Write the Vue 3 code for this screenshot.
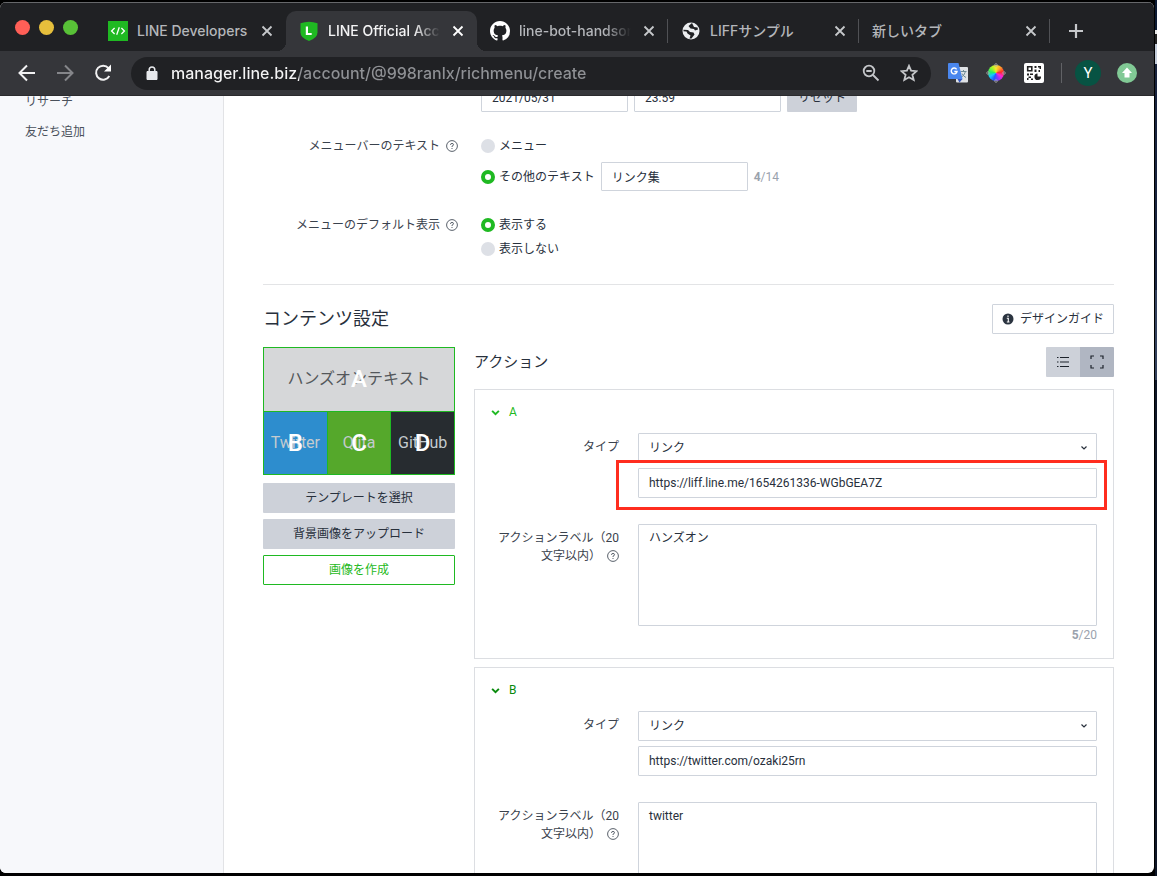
<script setup>
import { ref } from 'vue'

const tabs = [
  { icon: 'dev', title: 'LINE Developers' },
  { icon: 'shield', title: 'LINE Official Account Manager', active: true, fade: true },
  { icon: 'github', title: 'line-bot-handson', fade: true },
  { icon: 'globe', title: 'LIFFサンプル' },
  { icon: '', title: '新しいタブ' },
]

const url = ref('manager.line.biz/account/@998ranlx/richmenu/create')
const endDate = ref('2021/05/31')
const endTime = ref('23:59')
const barKind = ref('other')
const barText = ref('リンク集')
const display = ref('show')

const cards = ref([
  { key: 'A', url: 'https://liff.line.me/1654261336-WGbGEA7Z', text: 'ハンズオン', marked: true },
  { key: 'B', url: 'https://twitter.com/ozaki25rn', text: 'twitter', marked: false },
])

const areas = [
  { key: 'A', text: 'ハンズオンテキスト' },
  { key: 'B', text: 'Twitter' },
  { key: 'C', text: 'Qiita' },
  { key: 'D', text: 'GitHub' },
]
</script>

<template>
  <div class="desktop">
    <div class="window">
      <header class="tabstrip">
        <div class="lights">
          <button class="light red" aria-label="Close window"></button>
          <button class="light yellow" aria-label="Minimize window"></button>
          <button class="light green" aria-label="Zoom window"></button>
        </div>
        <div v-for="t in tabs" :key="t.title" class="tab" :class="{ active: t.active }">
          <svg v-if="t.icon === 'dev'" class="favicon" viewBox="0 0 20 20">
            <rect width="20" height="20" fill="#1fb922" />
            <path d="M6.6 7 3.6 10l3 3M13.4 7l3 3-3 3M11.3 6.3 8.7 13.7" fill="none" stroke="#fff" stroke-width="1.3" />
          </svg>
          <svg v-else-if="t.icon === 'shield'" class="favicon" viewBox="0 0 20 20">
            <path d="M1.5 2.2Q10-.8 18.500 2.200V11.500Q18.500 17 10 20 1.500 17 1.500 11.500Z" fill="#1fb922" />
            <path d="M7.900 5.500V13H12.700" fill="none" stroke="#fff" stroke-width="2.200" />
          </svg>
          <svg v-else-if="t.icon === 'github'" class="favicon" viewBox="0 0 16 16">
            <path fill="#fff" d="M8 0C3.58 0 0 3.58 0 8c0 3.54 2.29 6.53 5.470 7.590.4.070.550-.170.550-.380 0-.190-.010-.820-.010-1.490-2.010.370-2.530-.490-2.690-.940-.090-.230-.480-.940-.820-1.130-.280-.150-.680-.520-.010-.530.630-.010 1.080.580 1.230.820.720 1.210 1.870.870 2.330.660.070-.520.280-.870.510-1.070-1.780-.2-3.640-.890-3.640-3.950 0-.870.310-1.590.820-2.150-.080-.2-.360-1.020.080-2.120 0 0 .670-.210 2.200.820.640-.180 1.320-.270 2-.270s1.360.090 2 .270c1.530-1.040 2.200-.820 2.200-.820.440 1.100.160 1.920.080 2.120.510.560.820 1.270.820 2.150 0 3.070-1.870 3.750-3.650 3.950.290.250.540.730.540 1.480 0 1.070-.010 1.930-.010 2.200 0 .210.150.460.550.380A8.010 8.010 0 0 0 16 8c0-4.420-3.580-8-8-8Z" />
          </svg>
          <svg v-else-if="t.icon === 'globe'" class="favicon" viewBox="0 0 20 20">
            <circle cx="10" cy="10" r="8.500" fill="#eceef0" />
            <path d="M11 2 7.500 5 9.500 7.500 13 8 14 9.500 17 8.500 16.500 6.500 13 6 12 4ZM2.500 8.700 7 9 9 11 12.500 11.500 13.500 13.500 10.500 17.500 8.500 17.500 9.500 14.500 6.500 12.500 5.500 10.500 2.500 10.200Z" fill="#202124" />
          </svg>
          <span class="tab-title" :class="{ fade: t.fade }">{{ t.title }}</span>
          <button class="tab-close" :aria-label="'Close ' + t.title">
            <svg viewBox="0 0 12 12"><path d="M1.500 1.500 10.500 10.500M10.500 1.500 1.500 10.500" /></svg>
          </button>
        </div>
        <button class="new-tab" aria-label="New tab">
          <svg viewBox="0 0 16 16"><path d="M8 1V15M1 8H15" /></svg>
        </button>
      </header>

      <nav class="toolbar" aria-label="Browser">
        <button class="nav" aria-label="Back">
          <svg viewBox="0 0 20 20"><path d="M18 10H3M10 2.500 2.500 10 10 17.500" /></svg>
        </button>
        <button class="nav dim" aria-label="Forward">
          <svg viewBox="0 0 20 20"><path d="M2 10H17M10 2.500 17.500 10 10 17.500" /></svg>
        </button>
        <button class="nav" aria-label="Reload">
          <svg viewBox="0 0 20 20">
            <path d="M16.300 13A7 7 0 1 1 15.500 5.200" />
            <path d="M18 1.500V8.500H11Z" fill="#fff" stroke="none" />
          </svg>
        </button>
        <div class="omnibox">
          <svg class="lock" viewBox="0 0 12 14">
            <path d="M1 5.500H11V13.500H1Z" fill="#e8eaed" stroke="#e8eaed" stroke-linejoin="round" />
            <path d="M3.200 6V3.700a2.800 2.800 0 0 1 5.600 0V6" fill="none" stroke="#e8eaed" stroke-width="1.500" />
          </svg>
          <input v-model="url" class="address" aria-label="Address" />
          <button class="tool" aria-label="Zoom">
            <svg viewBox="0 0 18 18"><circle cx="7" cy="7" r="5.300" /><path d="M11 11 16.500 16.500M4.300 7H9.700" /></svg>
          </button>
          <button class="tool star" aria-label="Bookmark">
            <svg viewBox="0 0 18 18"><path d="M9 1.800 11.100 6.700 16.500 7.200 12.400 10.700 13.700 16 9 13.200 4.300 16 5.600 10.700 1.500 7.200 6.900 6.700Z" /></svg>
          </button>
        </div>
        <div class="extensions">
          <button class="ext" aria-label="Translate">
            <svg viewBox="0 0 20 20">
              <rect x="8" y="4" width="12" height="15.500" rx="1" fill="#dfe2e5" />
              <path d="M12.500 8.500H18.500M15.500 7V8.500M17.500 8.500Q16.500 12.500 13 14.500M14 10.500Q15.500 13.500 18 14.500" fill="none" stroke="#6e8b96" />
              <path d="M1 0H10.500L14.500 16H1Q0 16 0 15V1Q0 0 1 0Z" fill="#4a87ee" />
              <path d="M9.500 16H14.500L11.500 19.500Z" fill="#3457c0" />
              <path d="M8.600 6.400A2.900 2.900 0 1 0 9 8.500H6.300" fill="none" stroke="#fff" stroke-width="1.400" />
            </svg>
          </button>
          <button class="ext" aria-label="Color picker">
            <span class="wheel"></span>
            <svg class="target" viewBox="0 0 20 20"><g fill="none" stroke="#aaa" stroke-width=".8"><circle cx="10" cy="2" r="1.300" /><circle cx="10" cy="18" r="1.300" /><circle cx="2" cy="10" r="1.300" /><circle cx="18" cy="10" r="1.300" /></g></svg>
          </button>
          <button class="ext" aria-label="QR code">
            <svg viewBox="0 0 20 20">
              <rect width="20" height="20" rx="2" fill="#fff" />
              <path d="M3.700 3.700H7.800V7.800H3.700Z" fill="none" stroke="#222" stroke-width="1.600" />
              <path d="M10.500 3H12.500V5H10.500ZM14 3H17V6H15.500V4.500H14ZM10.500 6.500H12.500V9H10.500ZM14.500 7H16V9H14.500ZM3 10.500H5V12.500H3ZM6 10.500H9V12H6ZM4.500 13.500H7V15H4.500ZM3 15H4.500V17H3ZM7 15.500H9V17H7Z" fill="#222" />
              <path d="M13.500 10.500V13.500H17A3.300 3.300 0 1 1 13.500 10.500Z" fill="#222" />
            </svg>
          </button>
        </div>
        <button class="avatar">Y</button>
        <button class="update" aria-label="Update">
          <svg viewBox="0 0 20 20"><circle cx="10" cy="10" r="10" fill="#81c995" /><path d="M10 4.500 15 10H12.500V14.500H7.500V10H5Z" fill="#fff" /></svg>
        </button>
      </nav>

      <div class="page">
        <aside class="sidebar">
          <a href="#research">リサーチ</a>
          <a href="#friends">友だち追加</a>
        </aside>

        <main class="main">
          <div class="form">
            <div class="fields first">
              <input v-model="endDate" class="text short" aria-label="終了日" />
              <input v-model="endTime" class="text short" aria-label="終了時刻" />
              <button class="gray reset">リセット</button>
            </div>

            <div class="label">
              メニューバーのテキスト
              <svg class="help" viewBox="0 0 12 12"><circle cx="6" cy="6" r="5.400" /><path d="M4.500 4.900Q4.500 3.400 6 3.400T7.500 4.800Q7.500 5.600 6 6.200V7M6 8V9" /></svg>
            </div>
            <div class="stack bar">
              <label class="radio"><input v-model="barKind" type="radio" name="bar" value="menu" />メニュー</label>
              <div class="fields">
                <label class="radio"><input v-model="barKind" type="radio" name="bar" value="other" />その他のテキスト</label>
                <input v-model="barText" class="text short" aria-label="メニューバーのテキスト" />
                <span class="count"><b>4</b>/14</span>
              </div>
            </div>

            <div class="label">
              メニューのデフォルト表示
              <svg class="help" viewBox="0 0 12 12"><circle cx="6" cy="6" r="5.400" /><path d="M4.500 4.900Q4.500 3.400 6 3.400T7.500 4.800Q7.500 5.600 6 6.200V7M6 8V9" /></svg>
            </div>
            <div class="stack show">
              <label class="radio"><input v-model="display" type="radio" name="display" value="show" />表示する</label>
              <label class="radio"><input v-model="display" type="radio" name="display" value="hide" />表示しない</label>
            </div>
          </div>

          <section class="contents">
            <div class="head">
              <h2>コンテンツ設定</h2>
              <button class="outline">
                <svg viewBox="0 0 12 12"><circle cx="6" cy="6" r="5.500" fill="#2b3440" /><path d="M4.800 5.200H6.300V9M4.800 9H7.500M6 2.600V4" fill="none" stroke="#fff" stroke-width="1.100" /></svg>
                デザインガイド
              </button>
            </div>

            <div class="columns">
              <div class="left">
                <div class="preview">
                  <button v-for="a in areas" :key="a.key" class="area" :class="'area-' + a.key.toLowerCase()">
                    <span>{{ a.text }}</span>
                    <strong>{{ a.key }}</strong>
                  </button>
                </div>
                <button class="gray">テンプレートを選択</button>
                <button class="gray">背景画像をアップロード</button>
                <button class="create">画像を作成</button>
              </div>

              <div class="right">
                <div class="right-head">
                  <h3>アクション</h3>
                  <div class="toggle">
                    <button aria-label="リスト表示">
                      <svg viewBox="0 0 14 14"><path d="M4 2.500H13M4 7H13M4 11.500H13M1 2.500H2.500M1 7H2.500M1 11.500H2.500" /></svg>
                    </button>
                    <button class="on" aria-label="展開表示">
                      <svg viewBox="0 0 14 14"><path d="M1 4V1H4M10 1H13V4M13 10V13H10M4 13H1V10" /></svg>
                    </button>
                  </div>
                </div>

                <article v-for="c in cards" :key="c.key" class="card" :class="'card-' + c.key.toLowerCase()">
                  <button class="card-title">
                    <svg viewBox="0 0 8 6"><path d="M1 1.500 4 4.500 7 1.500" /></svg>{{ c.key }}
                  </button>
                  <div class="card-form">
                    <label class="label" :for="'type-' + c.key">タイプ</label>
                    <div class="links">
                      <div class="select">
                        <select :id="'type-' + c.key"><option>リンク</option></select>
                        <svg viewBox="0 0 8 6"><path d="M1.500 1.500 4 4 6.500 1.500" /></svg>
                      </div>
                      <div class="link" :class="{ marked: c.marked }">
                        <input v-model="c.url" class="text" :aria-label="'URL ' + c.key" />
                      </div>
                    </div>
                    <label class="label" :for="'text-' + c.key">
                      アクションラベル（20文字以内）
                      <svg class="help" viewBox="0 0 12 12"><circle cx="6" cy="6" r="5.400" /><path d="M4.500 4.900Q4.500 3.400 6 3.400T7.500 4.800Q7.500 5.600 6 6.200V7M6 8V9" /></svg>
                    </label>
                    <div class="memo">
                      <textarea :id="'text-' + c.key" v-model="c.text"></textarea>
                      <span class="count"><b>{{ c.text.length }}</b>/20</span>
                    </div>
                  </div>
                </article>
              </div>
            </div>
          </section>
        </main>
      </div>
    </div>
  </div>
</template>

<style>
html,
body {
  overflow: hidden;
  background: #000;
}
</style>

<style scoped>
* {
  box-sizing: border-box;
}
.desktop {
  height: 100vh;
  padding: 2px 3px 3px 0;
  background: linear-gradient(#0c1a33 30px, #e6e6e6 30px 34px, #222 34px 44px, #c3ccda 44px 64px, #18233d 64px 290px, #33405c 290px 380px, #0d1526 380px) right / 2px 100% no-repeat #000;
  font-family: Roboto, "Noto Sans CJK JP", sans-serif;
  font-size: 12px;
  line-height: 18px;
  color: #28303c;
}
button,
input,
select,
textarea {
  font: inherit;
  color: inherit;
  margin: 0;
  outline: none;
}
button {
  padding: 0;
  border: 0;
  background: none;
}
svg {
  display: block;
  flex: none;
}
.window {
  display: flex;
  flex-direction: column;
  height: 100%;
  overflow: hidden;
  border-radius: 6px;
  background: #fff;
}

/* browser frame */
.tabstrip {
  display: flex;
  align-items: flex-end;
  flex: none;
  height: 49px;
  padding-top: 8px;
  border-top: 1px solid #66676a;
  background: #202124;
  font-family: Inter, "Noto Sans CJK JP", sans-serif;
}
.lights {
  display: flex;
  flex: none;
  gap: 9px;
  align-items: center;
  width: 95px;
  height: 32px;
  padding-left: 15px;
  align-self: flex-start;
}
.light {
  width: 15px;
  height: 15px;
  border-radius: 50%;
}
.red { background: #ff5f57; }
.yellow { background: #e6bf3c; }
.green { background: #58c137; }
.tab {
  position: relative;
  display: flex;
  align-items: center;
  flex: 0 1 191px;
  min-width: 0;
  height: 40px;
  padding: 0 11px 0 13px;
  font-size: 14px;
  font-weight: 500;
  line-height: 24px;
  color: #b4b6ba;
}
.tab + .tab:not(.active)::after {
  content: "";
  position: absolute;
  right: 0;
  top: 8px;
  width: 1px;
  height: 24px;
  background: #505155;
}
.tab.active {
  border-radius: 10px 10px 0 0;
  background: #35363a;
  color: #f4f4f5;
}
.tab.active::before,
.tab.active::after {
  content: "";
  position: absolute;
  bottom: 0;
  width: 9px;
  height: 9px;
}
.tab.active::before {
  left: -9px;
  background: radial-gradient(circle at 0 0, transparent 9px, #35363a 9px);
}
.tab.active::after {
  right: -9px;
  background: radial-gradient(circle at 100% 0, transparent 9px, #35363a 9px);
}
.favicon {
  width: 20px;
  height: 20px;
  margin-right: 9px;
}
.tab-title {
  flex: 1;
  overflow: hidden;
  white-space: nowrap;
}
.tab-title.fade {
  margin-right: 10px;
  -webkit-mask-image: linear-gradient(90deg, #000 calc(100% - 26px), transparent);
  mask-image: linear-gradient(90deg, #000 calc(100% - 26px), transparent);
}
.tab-close {
  flex: none;
  padding: 2px;
  color: #c6c8cb;
}
.tab-close svg {
  width: 12px;
  height: 12px;
  stroke: currentColor;
  stroke-width: 1.8;
}
.active .tab-close {
  color: #fff;
}
.new-tab {
  align-self: center;
  margin-left: 18px;
}
.new-tab svg {
  width: 16px;
  height: 16px;
  stroke: #c6c8cb;
  stroke-width: 2.200;
}
.toolbar {
  display: flex;
  align-items: center;
  flex: none;
  height: 45px;
  padding: 0 17px 0 17px;
  border-bottom: 1px solid #2a2a2d;
  background: #35363a;
}
.nav {
  margin-right: 18px;
}
.nav svg {
  width: 20px;
  height: 20px;
  fill: none;
  stroke: #f1f1f2;
  stroke-width: 2;
}
.nav.dim svg {
  stroke: #85868a;
}
.omnibox {
  display: flex;
  align-items: center;
  flex: 1;
  min-width: 0;
  height: 33px;
  padding: 0 13px 0 15px;
  border-radius: 17px;
  background: #202124;
}
.lock {
  width: 12px;
  height: 14px;
}
.address {
  flex: 1;
  min-width: 0;
  height: 26px;
  margin-left: 13px;
  padding: 0;
  border: 0;
  background: linear-gradient(90deg, #f4f4f5 128px, #8f9195 128px);
  -webkit-background-clip: text;
  background-clip: text;
  color: transparent;
  font: 500 16px/26px Inter, sans-serif;
}
.tool {
  margin-left: 20px;
}
.tool svg {
  width: 18px;
  height: 18px;
  fill: none;
  stroke: #c4c6c9;
  stroke-width: 1.800;
}
.extensions {
  display: flex;
  gap: 18px;
  padding: 0 17px;
  border-right: 1px solid #616266;
}
.ext {
  position: relative;
  width: 20px;
  height: 20px;
}
.ext svg {
  position: relative;
  width: 20px;
  height: 20px;
}
.wheel {
  position: absolute;
  inset: 2px;
  border-radius: 50%;
  background: conic-gradient(#ffe62b, #ff9d2b, #ff2b2b, #ff25cf, #8b35ff, #245bff, #18c8ff, #25ef67, #9df52b, #ffe62b);
}
.avatar {
  width: 26px;
  height: 26px;
  margin: 0 16px 0 13px;
  border-radius: 50%;
  background: #075343;
  color: #fff;
  font-size: 15px;
}
.update svg {
  width: 20px;
  height: 20px;
}

/* page */
.page {
  display: flex;
  flex: 1;
  min-height: 0;
  overflow: hidden;
}
.sidebar {
  display: flex;
  flex-direction: column;
  flex: none;
  width: 224px;
  padding-left: 25px;
  border-right: 1px solid #e2e3e6;
  background: #f7f8fb;
}
.sidebar a {
  line-height: 30px;
  color: #4a515b;
  text-decoration: none;
}
.sidebar a:first-child {
  margin-top: -9px;
}
.main {
  flex: 1;
  min-width: 0;
  padding: 0 40px 0 39px;
}
.form {
  display: grid;
  grid-template-columns: 195px 1fr;
  column-gap: 23px;
  row-gap: 25px;
  margin-top: -13px;
  padding-bottom: 26px;
  border-bottom: 1px solid #e3e4e6;
}
.fields {
  display: flex;
  align-items: center;
  gap: 6px;
}
.fields.first {
  grid-column: 2;
}
.label {
  text-align: right;
  color: #3a424d;
}
.help {
  display: inline-block;
  width: 12px;
  height: 12px;
  margin-left: 3px;
  vertical-align: -2px;
  fill: none;
  stroke: #59616b;
  stroke-width: 1;
}
.stack {
  display: flex;
  flex-direction: column;
  align-items: flex-start;
}
.bar {
  gap: 7px;
}
.show {
  gap: 6px;
}
.radio {
  display: flex;
  align-items: center;
  gap: 4px;
}
.radio input {
  width: 14px;
  height: 14px;
  appearance: none;
  border-radius: 50%;
  background: #dde0e6;
}
.radio input:checked {
  border: 4px solid #1fb922;
  background: #fff;
}
.text {
  display: block;
  width: 100%;
  height: 30px;
  padding: 0 10px;
  border: 1px solid #cfd4dc;
  border-radius: 1px;
  background: #fff;
}
.short {
  width: 147px;
  height: 29px;
}
.count {
  color: #9aa2ad;
}
.gray,
.create {
  width: 100%;
  height: 30px;
  border-radius: 1px;
}
.gray {
  background: #cdd1d9;
}
.gray.reset {
  width: 70px;
  height: 29px;
}
.create {
  border: 1px solid #1fb922;
  color: #1fb922;
}
.contents {
  padding-top: 19px;
}
.head {
  display: flex;
  align-items: center;
  justify-content: space-between;
}
h2,
h3 {
  margin: 0;
  font-weight: 400;
}
h2 {
  font-size: 18px;
  line-height: 26px;
}
h3 {
  font-size: 15px;
  line-height: 22px;
}
.outline {
  display: flex;
  align-items: center;
  gap: 6px;
  height: 30px;
  padding: 0 9px;
  border: 1px solid #cfd4dc;
  border-radius: 1px;
}
.outline svg {
  width: 12px;
  height: 12px;
}
.columns {
  display: grid;
  grid-template-columns: 192px 1fr;
  gap: 19px;
  margin-top: 13px;
}
.left {
  display: flex;
  flex-direction: column;
  gap: 6px;
}
.preview {
  display: grid;
  grid-template: 1fr 1fr / 1fr 1fr 1fr;
  gap: 1px;
  height: 128px;
  margin-bottom: 2px;
  border: 1px solid #1fb922;
  background: #1fb922;
}
.area {
  position: relative;
  font-size: 16px;
  color: #c4cbcf;
}
.area strong {
  position: absolute;
  inset: 0;
  display: flex;
  align-items: center;
  justify-content: center;
  font-size: 24px;
  font-weight: 500;
  color: #fff;
}
.area-a {
  grid-column: 1 / -1;
  background: #d6d7d9;
  color: #54575b;
}
.area-b { background: #2d8dce; }
.area-c { background: #55a82b; }
.area-d { background: #272c30; }
.right-head {
  display: flex;
  justify-content: space-between;
  align-items: center;
  margin-bottom: 12px;
}
.toggle {
  display: flex;
  overflow: hidden;
  border-radius: 1px;
}
.toggle button {
  display: flex;
  align-items: center;
  justify-content: center;
  width: 34px;
  height: 30px;
  background: #cdd1d9;
}
.toggle .on {
  background: #b0b6c2;
}
.toggle svg {
  width: 14px;
  height: 14px;
  fill: none;
  stroke: #1c222b;
  stroke-width: 1.200;
}
.card {
  margin-bottom: 8px;
  padding: 13px 16px 14px;
  border: 1px solid #dcdee2;
}
.card-title {
  display: flex;
  align-items: center;
  gap: 9px;
  height: 18px;
  color: #1fb922;
}
.card-title svg {
  width: 9px;
  height: 7px;
  fill: none;
  stroke: currentColor;
  stroke-width: 1.700;
}
.card-b .card-title {
  color: #098a0c;
}
.card-form {
  display: grid;
  grid-template-columns: 128px 1fr;
  column-gap: 19px;
  row-gap: 26px;
  margin-top: 12px;
}
.card-form .label {
  padding-top: 5px;
}
.links {
  display: flex;
  flex-direction: column;
  gap: 5px;
}
.select {
  position: relative;
}
select {
  display: block;
  width: 100%;
  height: 30px;
  padding: 0 10px;
  appearance: none;
  border: 1px solid #cfd4dc;
  border-radius: 1px;
  background: #fff;
}
.select svg {
  position: absolute;
  right: 9px;
  top: 12px;
  width: 8px;
  height: 6px;
  fill: none;
  stroke: #28303c;
  stroke-width: 1.200;
  pointer-events: none;
}
.link {
  position: relative;
}
.marked::after {
  content: "";
  position: absolute;
  inset: -8px -10px -12px -22px;
  border: 3px solid #ff2d1f;
  pointer-events: none;
}
.memo {
  display: flex;
  flex-direction: column;
}
textarea {
  display: block;
  height: 102px;
  padding: 4px 10px;
  border: 1px solid #cfd4dc;
  border-radius: 1px;
  resize: none;
}
.memo .count {
  text-align: right;
}
</style>
